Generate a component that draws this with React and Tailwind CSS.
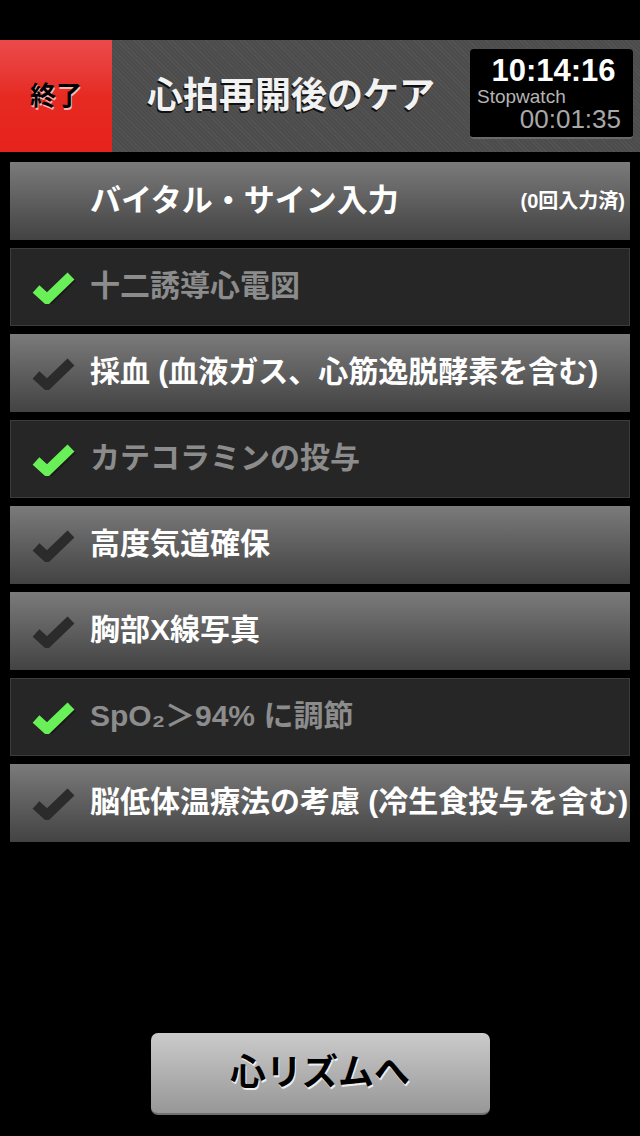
import React from 'react';

const items = [
  { label: '十二誘導心電図', done: true },
  { label: '採血 (血液ガス、心筋逸脱酵素を含む)', done: false },
  { label: 'カテコラミンの投与', done: true },
  { label: '高度気道確保', done: false },
  { label: '胸部X線写真', done: false },
  { label: 'SpO₂＞94% に調節', done: true },
  { label: '脳低体温療法の考慮 (冷生食投与を含む)', done: false },
];

function Check({ done }) {
  return (
    <svg width="46" height="34" viewBox="0 0 46 34" className="shrink-0">
      {done && (
        <polyline points="5,19 16,29 40,6" fill="none" stroke="#1a1a1a" strokeWidth="10" transform="translate(1.5,1.5)" />
      )}
      <polyline points="5,19 16,29 40,6" fill="none" stroke={done ? '#69f058' : '#2b2b2b'} strokeWidth="10" />
    </svg>
  );
}

export default function App() {
  const jp = { fontFamily: '"Liberation Sans", "Noto Sans CJK JP", sans-serif' };

  return (
    <div className="w-[640px] h-[1136px] bg-black flex flex-col" style={jp}>
      {/* header */}
      <header className="mt-[40px] h-[112px] flex bg-[repeating-linear-gradient(45deg,#4c4c4c_0px,#4c4c4c_2px,#535353_2px,#535353_3px)]">
        <button className="w-[112px] h-full bg-gradient-to-b from-[#ea4a4a] via-[#e62a22] to-[#e6231c] flex items-center justify-center text-[26px] font-bold text-black [text-shadow:1px_2px_0_#f6b6b6]">
          終了
        </button>
        <h1 className="flex-1 flex items-center justify-center text-[36px] font-bold text-[#f2f2f2] [text-shadow:-1px_2px_0_#111]">
          心拍再開後のケア
        </h1>
        <div className="mt-[9px] mr-[7px] w-[163px] h-[90px] bg-black rounded-[4px] border-b-2 border-[#6a6a6a] flex flex-col px-[7px] pt-[6px]" style={{ fontFamily: '"Liberation Sans", Arial, sans-serif' }}>
          <div className="text-center text-[31px] leading-[31px] font-bold text-white pl-[4px]">10:14:16</div>
          <div className="text-[19px] leading-[19px] text-[#b4b4b4] mt-[1px]">Stopwatch</div>
          <div className="text-right text-[26px] leading-[26px] text-[#a8a8a8] pr-[5px]">00:01:35</div>
        </div>
      </header>

      {/* list */}
      <div className="px-[10px] pt-[10px] flex flex-col gap-[8px]">
        <button className="h-[78px] flex items-center bg-gradient-to-b from-[#7b7b7b] to-[#434343] pl-[80px] pr-[5px]">
          <span className="flex-1 text-left text-[31px] font-bold text-white">バイタル・サイン入力</span>
          <span className="text-[20px] font-bold text-white">(0回入力済)</span>
        </button>
        {items.map((it) => (
          <button
            key={it.label}
            className={
              it.done
                ? 'h-[78px] flex items-center gap-[13px] pl-[20px] bg-[#262626] border border-[#3c3c3c]'
                : 'h-[78px] flex items-center gap-[13px] pl-[21px] bg-gradient-to-b from-[#7b7b7b] to-[#434343]'
            }
          >
            <Check done={it.done} />
            <span className={it.done ? 'text-[30px] font-bold text-[#8c8c8c] whitespace-nowrap -mt-[4px]' : 'text-[30px] font-bold text-white whitespace-nowrap -mt-[4px]'}>
              {it.label}
            </span>
          </button>
        ))}
      </div>

      {/* bottom action */}
      <div className="mt-auto mb-[21px] flex justify-center">
        <button className="w-[339px] h-[82px] rounded-[7px] bg-gradient-to-b from-[#cbcbcb] to-[#979797] border-b-2 border-[#6f6f6f] text-[36px] font-bold text-black [text-shadow:1px_2px_0_#eeeeee]">
          心リズムへ
        </button>
      </div>
    </div>
  );
}
